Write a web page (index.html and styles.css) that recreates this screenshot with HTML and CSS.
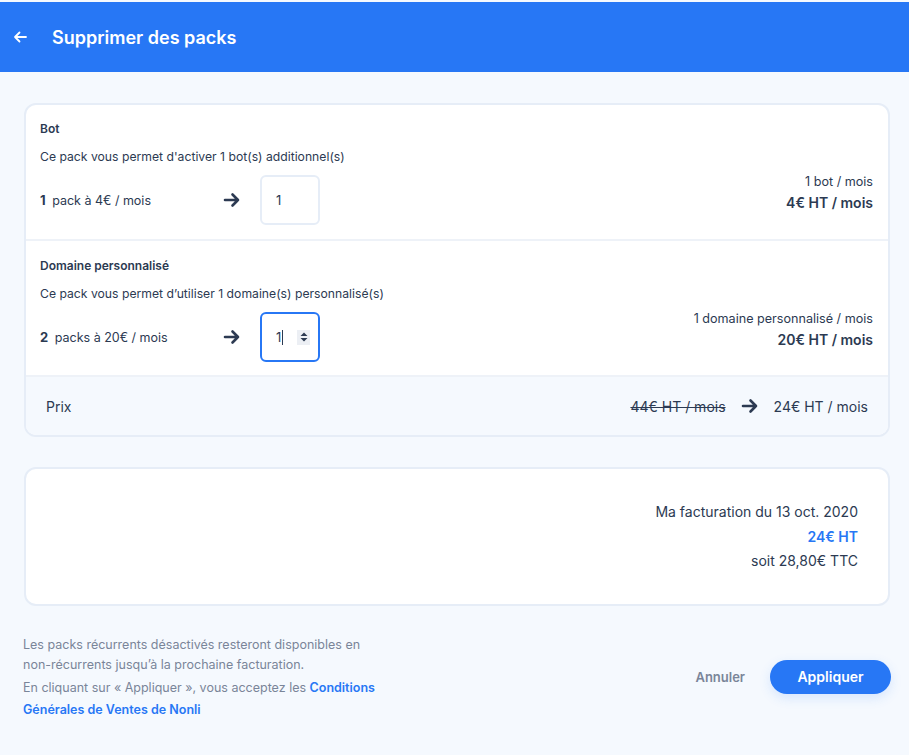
FILE: index.html
```html
<!DOCTYPE html>
<html lang="fr">
    <head>
        <meta charset="UTF-8" />
        <meta name="viewport" content="width=device-width, initial-scale=1.0" />
        <title>Supprimer des packs</title>
        <link rel="stylesheet" href="styles.css">
    </head>
    <body>
        <header class="topbar">
            <a class="back_btn" href="#">
                <svg width="14" height="12" viewBox="0 0 14 12">
                    <path d="M13 6H2 M6.5 1.5L2 6l4.5 4.5" fill="none" stroke="#fff" stroke-width="1.8" stroke-linecap="round" stroke-linejoin="round" />
                </svg>
            </a>
            <h1>Supprimer des packs</h1>
        </header>

        <main class="content">
            <section class="card packs_card">
                <div class="pack">
                    <div class="pack_title">Bot</div>
                    <div class="pack_desc">Ce pack vous permet d'activer 1 bot(s) additionnel(s)</div>
                    <div class="pack_row">
                        <div class="pack_left">
                            <div class="pack_count"><b>1</b> pack à 4€ / mois</div>
                            <svg class="row_arrow" width="18" height="16" viewBox="0 0 18 16">
                                <path d="M2 8h13 M9.5 2.5L15 8l-5.5 5.5" fill="none" stroke="#2c3a52" stroke-width="2.6" stroke-linecap="round" stroke-linejoin="round" />
                            </svg>
                            <div class="qty_box">1</div>
                        </div>
                        <div class="pack_right">
                            <div>1 bot / mois</div>
                            <div class="pack_price">4€ HT / mois</div>
                        </div>
                    </div>
                </div>

                <div class="pack">
                    <div class="pack_title">Domaine personnalisé</div>
                    <div class="pack_desc">Ce pack vous permet d’utiliser 1 domaine(s) personnalisé(s)</div>
                    <div class="pack_row">
                        <div class="pack_left">
                            <div class="pack_count"><b>2</b> packs à 20€ / mois</div>
                            <svg class="row_arrow" width="18" height="16" viewBox="0 0 18 16">
                                <path d="M2 8h13 M9.5 2.5L15 8l-5.5 5.5" fill="none" stroke="#2c3a52" stroke-width="2.6" stroke-linecap="round" stroke-linejoin="round" />
                            </svg>
                            <div class="qty_box active">
                                <span>1<i class="caret"></i></span>
                                <span class="spinner">
                                    <svg width="8" height="10" viewBox="0 0 8 10">
                                        <path d="M4 0.5L7.5 4H0.5z M4 9.5L7.5 6H0.5z" fill="#2c3a52" />
                                    </svg>
                                </span>
                            </div>
                        </div>
                        <div class="pack_right">
                            <div>1 domaine personnalisé / mois</div>
                            <div class="pack_price">20€ HT / mois</div>
                        </div>
                    </div>
                </div>

                <div class="price_row">
                    <span>Prix</span>
                    <div class="price_change">
                        <s>44€ HT / mois</s>
                        <svg width="18" height="16" viewBox="0 0 18 16">
                            <path d="M2 8h13 M9.5 2.5L15 8l-5.5 5.5" fill="none" stroke="#2c3a52" stroke-width="2.6" stroke-linecap="round" stroke-linejoin="round" />
                        </svg>
                        <span>24€ HT / mois</span>
                    </div>
                </div>
            </section>

            <section class="card billing_card">
                <div>Ma facturation du 13 oct. 2020</div>
                <div class="billing_ht">24€ HT</div>
                <div>soit 28,80€ TTC</div>
            </section>

            <footer class="bottom">
                <div class="notice">
                    <p class="notice_first">Les packs récurrents désactivés resteront disponibles en non-récurrents jusqu’à la prochaine facturation.</p>
                    <p>En cliquant sur « Appliquer », vous acceptez les <a href="#">Conditions Générales de Ventes de Nonli</a></p>
                </div>
                <div class="actions">
                    <button class="cancel_btn">Annuler</button>
                    <button class="apply_btn">Appliquer</button>
                </div>
            </footer>
        </main>
    </body>
</html>
```

FILE: styles.css
```css
body {
    margin: 0;
    padding-top: 2px;
    font-family: "Inter", "Lato", sans-serif;
    background: #f5f9fe;
    color: #2c3a52;
}

.topbar {
    display: flex;
    align-items: center;
    height: 70px;
    padding: 0 13px;
    background: #2777f5;
    color: white;
}

.back_btn {
    display: flex;
    width: 14px;
    margin-right: 25px;
}

.topbar h1 {
    margin: 0;
    font-size: 18px;
    font-weight: 600;
}

.content {
    padding: 31px 19px 0 24px;
}

.card {
    background: white;
    border: 2px solid #e6edf7;
    border-radius: 12px;
}

.packs_card {
    overflow: hidden;
}

.pack {
    padding: 14px 15px 14px 14px;
    border-bottom: 2px solid #eef2f8;
    font-size: 12px;
}

.pack + .pack {
    padding-top: 15px;
    padding-bottom: 13px;
}

.pack_title {
    font-weight: 600;
    line-height: 20px;
}

.pack_desc {
    margin-top: 8px;
    line-height: 20px;
    font-size: 12.2px;
}

.pack_row {
    display: flex;
    justify-content: space-between;
    align-items: flex-start;
    margin-top: 8px;
}

.pack_left {
    display: flex;
    align-items: center;
}

.pack_count {
    width: 183px;
    font-size: 12.5px;
}

.pack_count b {
    font-size: 13px;
    margin-right: 3px;
}

.row_arrow {
    margin-right: 19px;
}

.qty_box {
    display: flex;
    align-items: center;
    justify-content: space-between;
    box-sizing: border-box;
    width: 60px;
    height: 50px;
    padding: 0 8px 0 14px;
    border: 2px solid #e6edf7;
    border-radius: 6px;
    font-size: 13px;
}

.qty_box.active {
    border-color: #2777f5;
}

.caret {
    display: inline-block;
    width: 1px;
    height: 15px;
    margin-left: 1px;
    vertical-align: -3px;
    background: #2c3a52;
}

.spinner {
    display: flex;
    align-items: center;
    justify-content: center;
    width: 13px;
    height: 15px;
    background: #eceff4;
}

.pack_right {
    margin-top: -3px;
    text-align: right;
    font-size: 12.6px;
    line-height: 20px;
}

.pack_price {
    font-size: 14px;
    font-weight: 600;
    line-height: 22px;
}

.price_row {
    display: flex;
    justify-content: space-between;
    align-items: center;
    height: 58px;
    padding: 0 20px;
    background: #f5f9fe;
    font-size: 14px;
}

.price_change {
    display: flex;
    align-items: center;
    gap: 15px;
}

.billing_card {
    margin-top: 30px;
    padding: 31px 30px 30px;
    text-align: right;
    font-size: 14px;
    line-height: 24.5px;
}

.billing_ht {
    color: #2777f5;
    font-weight: 600;
}

.bottom {
    display: flex;
    justify-content: space-between;
    align-items: center;
    margin-left: -1px;
    padding: 29px 0 30px;
}

.notice {
    width: 360px;
    font-size: 12.5px;
    color: #7a8599;
}

.notice p {
    margin: 0;
    line-height: 22px;
}

.notice .notice_first {
    line-height: 20px;
    margin-bottom: 2px;
}

.notice a {
    color: #2777f5;
    font-weight: 600;
    text-decoration: none;
}

.actions {
    display: flex;
    align-items: center;
    gap: 25px;
    margin-top: -2px;
    margin-right: -1px;
}

.cancel_btn {
    padding: 0;
    border: none;
    background: none;
    font-family: inherit;
    font-size: 13px;
    font-weight: 600;
    color: #7a8599;
    cursor: pointer;
}

.apply_btn {
    width: 121px;
    height: 34px;
    border: none;
    border-radius: 17px;
    background: #2777f5;
    color: white;
    font-family: inherit;
    font-size: 14px;
    font-weight: 600;
    cursor: pointer;
    box-shadow: 0 4px 12px rgba(39, 119, 245, 0.15);
}
```
